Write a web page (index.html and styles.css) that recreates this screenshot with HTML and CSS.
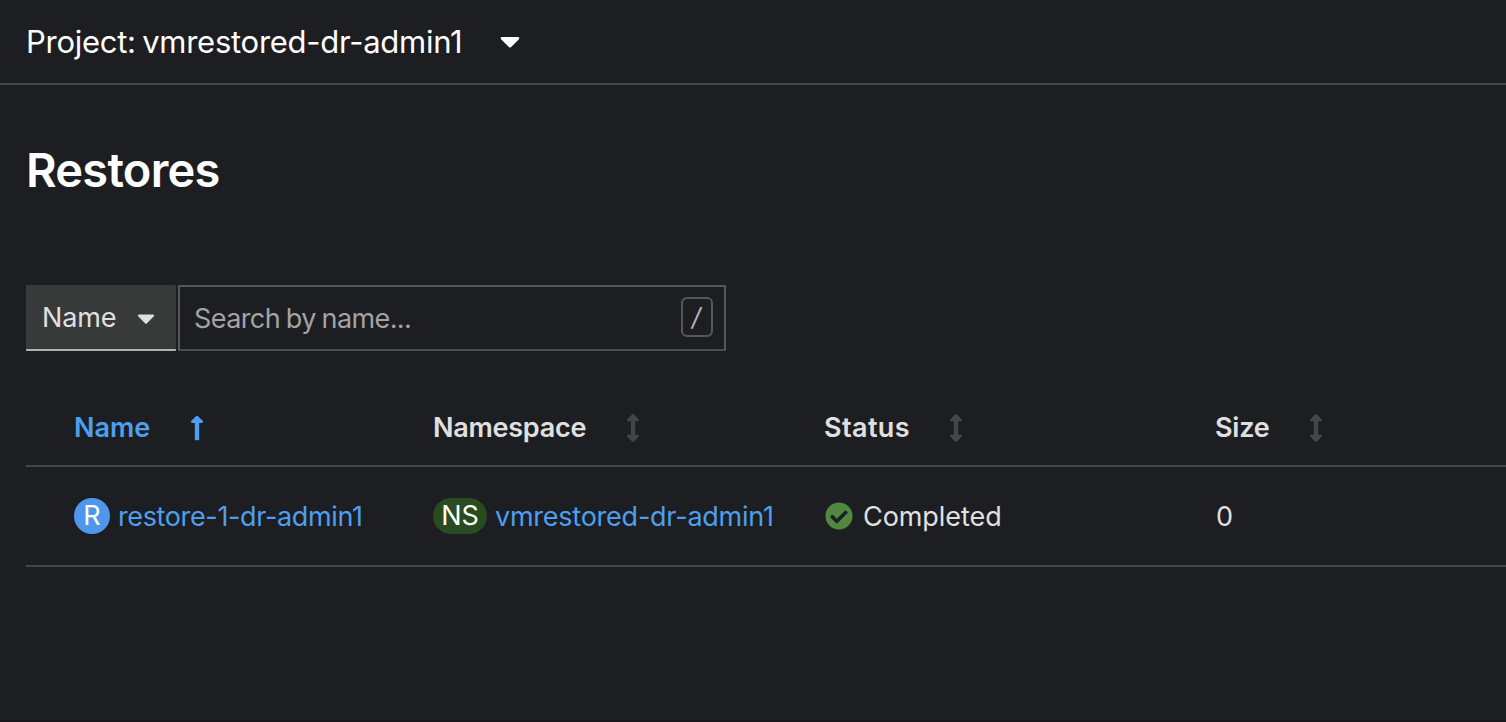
FILE: index.html
```html
<!DOCTYPE html>
<html lang="en">
<head>
<meta charset="utf-8">
<title>Restores</title>
<link rel="stylesheet" href="styles.css">
</head>
<body>
<svg class="defs" width="0" height="0" aria-hidden="true">
  <symbol id="caret" viewBox="0 0 320 512"><path d="M31.3 192h257.3c17.8 0 26.7 21.5 14.1 34.1L174.1 354.8c-7.8 7.8-20.5 7.8-28.3 0L17.2 226.1C4.6 213.5 13.5 192 31.3 192z"/></symbol>
  <symbol id="sort" viewBox="0 0 256 512"><path d="M214.059 377.941H168V134.059h46.059c21.382 0 32.09-25.851 16.971-40.971L144.97 7.029c-9.373-9.373-24.568-9.373-33.941 0L24.97 93.088c-15.119 15.119-4.411 40.971 16.971 40.971H88v243.882H41.941c-21.382 0-32.09 25.851-16.971 40.971l86.059 86.059c9.373 9.373 24.568 9.373 33.941 0l86.059-86.059c15.119-15.119 4.41-40.971-16.971-40.971z"/></symbol>
  <symbol id="up" viewBox="0 0 256 512"><path d="M88 166.059V468c0 6.627 5.373 12 12 12h56c6.627 0 12-5.373 12-12V166.059h46.059c21.382 0 32.09-25.851 16.971-40.971l-86.059-86.059c-9.373-9.373-24.569-9.373-33.941 0l-86.059 86.059c-15.119 15.119-4.411 40.971 16.971 40.971H88z"/></symbol>
  <symbol id="check" viewBox="0 0 512 512"><path d="M504 256c0 136.967-111.033 248-248 248S8 392.967 8 256 119.033 8 256 8s248 111.033 248 248zM227.314 387.314l184-184c6.248-6.248 6.248-16.379 0-22.627l-22.627-22.627c-6.248-6.249-16.379-6.249-22.628 0L216 308.118l-70.059-70.059c-6.248-6.248-16.379-6.248-22.628 0l-22.627 22.627c-6.248 6.248-6.248 16.379 0 22.627l104 104c6.249 6.249 16.379 6.249 22.628.001z"/></symbol>
</svg>
<div class="page">
  <header class="project-bar">
    <span class="project-label">Project: vmrestored-dr-admin1</span>
    <svg class="project-caret"><use href="#caret"/></svg>
  </header>
  <main class="content">
    <h1 class="title">Restores</h1>
    <div class="toolbar">
      <div class="filter">
        <span class="filter-label">Name</span>
        <svg class="filter-caret"><use href="#caret"/></svg>
      </div>
      <div class="search">
        <span class="placeholder">Search by name...</span>
        <kbd class="key"><span class="slash">/</span></kbd>
      </div>
    </div>
    <div class="table">
      <div class="row head">
        <div class="cell sorted"><span class="th th-name">Name</span><svg class="sort"><use href="#up"/></svg></div>
        <div class="cell"><span class="th th-namespace">Namespace</span><svg class="sort"><use href="#sort"/></svg></div>
        <div class="cell"><span class="th th-status">Status</span><svg class="sort"><use href="#sort"/></svg></div>
        <div class="cell"><span class="th th-size">Size</span><svg class="sort"><use href="#sort"/></svg></div>
      </div>
      <div class="row body">
        <div class="cell"><span class="badge badge-r">R</span><a class="link link-restore">restore-1-dr-admin1</a></div>
        <div class="cell"><span class="badge badge-ns">NS</span><a class="link link-ns">vmrestored-dr-admin1</a></div>
        <div class="cell"><svg class="check"><use href="#check"/></svg><span class="status">Completed</span></div>
        <div class="cell"><span class="size">0</span></div>
      </div>
    </div>
  </main>
</div>
</body>
</html>
```

FILE: styles.css
```css
* { box-sizing: border-box; }
body {
  margin: 0;
  background: #1d1e21;
  color: #e0e0e0;
  font: 27px/36px Inter, "Liberation Sans", sans-serif;
  white-space: nowrap;
}
svg { display: block; flex: none; fill: currentColor; }
.defs { position: absolute; }
.page { height: 722px; overflow: hidden; border-bottom: 2px solid #19181c; }
.project-bar {
  display: flex;
  align-items: center;
  height: 85px;
  padding: 0 26px 1px;
  border-bottom: 2px solid #444548;
  color: #fff;
  font-size: 31px;
}
.project-label {
  width: 474px;
  padding-top: 2px;
  letter-spacing: -0.27px;
  word-spacing: -2px;
}
.project-caret { width: 20px; height: 32px; }
.content { padding-left: 26px; }
.title {
  margin: 0;
  padding-top: 54px;
  height: 200px;
  color: #fff;
  font-size: 47px;
  font-weight: 580;
  letter-spacing: -0.75px;
  line-height: 62px;
}
.toolbar { display: flex; gap: 2px; height: 66px; }
.filter {
  display: flex;
  align-items: center;
  width: 150px;
  padding: 1px 0 0 16px;
  background: #383939;
  border-bottom: 2px solid #b0b2b4;
  border-radius: 1px;
}
.filter-label { width: 95px; padding-top: 1px; letter-spacing: -0.1px; }
.filter-caret { width: 18px; height: 28px; }
.search {
  display: flex;
  align-items: center;
  justify-content: space-between;
  width: 548px;
  padding: 0 11px 0 14px;
  border: 2px solid #58585b;
  border-bottom-color: #4c4d50;
}
.placeholder { padding-top: 1px; color: #a3a3a3; letter-spacing: -0.6px; word-spacing: -1.2px; }
.key {
  width: 32px;
  height: 40px;
  margin-bottom: 2px;
  border: 2px solid #58585b;
  border-radius: 6px;
  color: #b8b8b8;
  font: 25px/36px Inter, sans-serif;
  text-align: center;
}
.slash { display: inline-block; transform: skewX(-10deg); }
.table { padding-top: 39px; }
.row {
  display: grid;
  grid-template-columns: 359px 391px 391px 1fr;
  padding-left: 48px;
  border-bottom: 2px solid #444548;
}
.head { height: 77px; }
.body { height: 100px; }
.cell { display: flex; align-items: center; }
.th { font-weight: 600; padding-top: 1px; }
.th-name { width: 77px; }
.th-namespace { width: 154px; letter-spacing: -0.25px; }
.th-status { width: 86px; letter-spacing: 0.4px; }
.th-size { width: 55px; letter-spacing: -0.2px; }
.sort { width: 14px; height: 28px; margin-left: 39px; color: #444548; }
.sorted, .sorted .sort { color: #4d9ff0; }
.badge {
  height: 36px;
  border-radius: 18px;
  color: #fff;
  text-align: center;
}
.badge-r { width: 36px; margin-right: 8px; background: #4f97ec; }
.badge-ns { width: 54px; margin-right: 8px; background: #294b20; }
.link { padding-top: 1px; color: #4d9ff0; }
.link-restore { letter-spacing: -0.37px; }
.link-ns { letter-spacing: -0.24px; }
.check { width: 28px; height: 28px; margin: 0 10px 0 1px; color: #52873f; }
.status { padding-top: 1px; letter-spacing: -0.07px; }
.size { padding: 1px 0 0 1px; }
```
